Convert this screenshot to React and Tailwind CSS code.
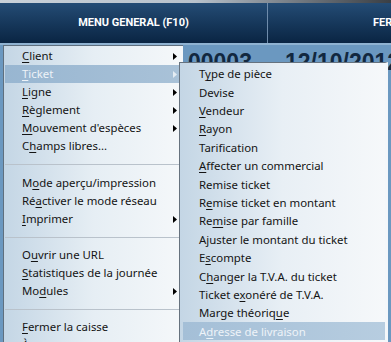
import React from 'react';

const mainMenu = [
  { label: 'Client', u: 0, sub: true },
  { label: 'Ticket', u: 0, sub: true, active: true },
  { label: 'Ligne', u: 0, sub: true },
  { label: 'Règlement', u: 0, sub: true },
  { label: "Mouvement d'espèces", u: 0, sub: true },
  { label: 'Champs libres...', u: 1 },
  { sep: true, h: 'h-[19px]' },
  { label: 'Mode aperçu/impression', u: 1 },
  { label: 'Réactiver le mode réseau', u: 2 },
  { label: 'Imprimer', u: 0, sub: true },
  { sep: true, h: 'h-[18px]' },
  { label: 'Ouvrir une URL', u: 1 },
  { label: 'Statistiques de la journée', u: 0 },
  { label: 'Modules', u: 2, sub: true },
  { sep: true, h: 'h-[18px]' },
  { label: 'Fermer la caisse', u: 0 },
  { label: 'À propos...', u: 0 },
];

const ticketMenu = [
  { label: 'Type de pièce', u: 1 },
  { label: 'Devise', u: -1 },
  { label: 'Vendeur', u: 0 },
  { label: 'Rayon', u: 0 },
  { label: 'Tarification', u: -1 },
  { label: 'Affecter un commercial', u: 0 },
  { label: 'Remise ticket', u: -1 },
  { label: 'Remise ticket en montant', u: 1 },
  { label: 'Remise par famille', u: 2 },
  { label: 'Ajuster le montant du ticket', u: -1 },
  { label: 'Escompte', u: 1 },
  { label: 'Changer la T.V.A. du ticket', u: 1 },
  { label: 'Ticket exonéré de T.V.A.', u: 8 },
  { label: 'Marge théorique', u: 13 },
  { label: 'Adresse de livraison', u: 1, active: true },
];

function Label({ text, u }) {
  if (u < 0) return <span>{text}</span>;
  return (
    <span>
      {text.slice(0, u)}
      <span className="underline underline-offset-2 decoration-1">{text[u]}</span>
      {text.slice(u + 1)}
    </span>
  );
}

function Arrow({ light }) {
  return (
    <svg width="4" height="7" viewBox="0 0 4 7" className="absolute left-[168px] top-[6px]">
      <path d="M0 0 L4 3.5 L0 7 Z" fill={light ? '#e4ecf3' : '#000'} />
    </svg>
  );
}

export default function App() {
  return (
    <div className="relative w-[391px] h-[342px] overflow-hidden bg-[#6b98c0] font-['Noto_Sans',sans-serif]">
      <div className="h-[3px] bg-gradient-to-r from-[#c9d1d9] via-[#b8c2cc] to-[#3a3f45]" />
      <div className="flex h-[40px] bg-gradient-to-b from-[#244c75] to-[#0a2543] font-['Roboto',sans-serif] text-[11px] font-bold text-white">
        <div className="w-[268px] shrink-0 flex items-center justify-center border-r border-[#6f8cab]">MENU GENERAL (F10)</div>
        <div className="flex-1 min-w-0 overflow-hidden flex items-center pl-[105px] whitespace-nowrap">FERMETURE</div>
      </div>
      <div className="h-[2px] bg-[#8fb2d1]" />
      <div className="flex gap-[33px] pl-[188px] pt-[3px] font-['Liberation_Sans',sans-serif] text-[23px] font-bold text-[#12283f] whitespace-nowrap leading-[28px]">
        <span>00003</span>
        <span>12/10/2012</span>
      </div>

      {/* main menu */}
      <div className="absolute left-[3px] top-[45px] w-[180px] h-[320px] border-l border-t border-[#5f6f7e] bg-gradient-to-r from-[#c4d6e5] via-[#e6eef4] to-[#f5f8fa] pt-px text-[11.4px] text-[#141414]">
        {mainMenu.map((it, i) =>
          it.sep ? (
            <div key={i} className={`${it.h} flex items-center px-[1px]`}>
              <div className="h-px w-full bg-[#b9c2cb]" />
            </div>
          ) : (
            <div
              key={i}
              className={`relative h-[18px] ml-px mr-px pl-[17px] flex items-center whitespace-nowrap ${it.active ? 'bg-gradient-to-r from-[#98b6d1] to-[#a9c2d8] text-[#eef3f8]' : ''}`}
            >
              <Label text={it.label} u={it.u} />
              {it.sub && <Arrow light={it.active} />}
            </div>
          )
        )}
      </div>

      {/* ticket submenu */}
      <div className="absolute left-[179px] top-[62px] w-[209px] h-[282px] border-l border-t border-[#66727e] border-r-[3px] border-r-[#f4f7fa] bg-gradient-to-r from-[#c4d6e5] via-[#e8eff5] to-[#f6f8fa] pt-[1.6px] text-[11.4px] text-[#141414]">
        {ticketMenu.map((it, i) => (
          <div
            key={i}
            className={`h-[18.4px] ml-[3px] pl-[16px] flex items-center whitespace-nowrap ${it.active ? 'bg-gradient-to-r from-[#a4bfd7] to-[#b7cde0] text-[#eef3f8]' : ''}`}
          >
            <Label text={it.label} u={it.u} />
          </div>
        ))}
      </div>
    </div>
  );
}
